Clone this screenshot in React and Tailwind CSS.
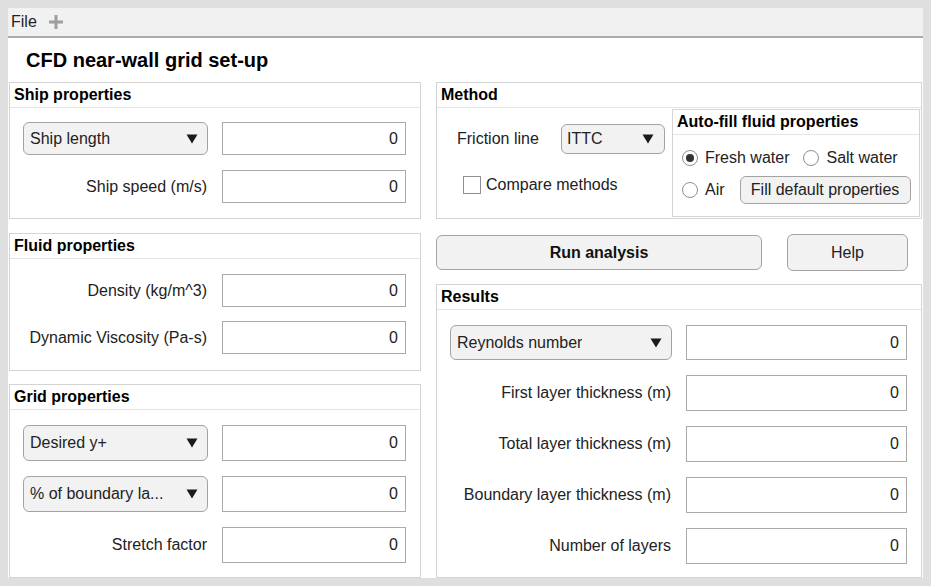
import React from 'react'

const FONT = { fontFamily: '"Liberation Sans", Arial, sans-serif' }

function Caret() {
  return (
    <svg width="12" height="10" viewBox="0 0 12 10" className="shrink-0">
      <path d="M0.5 0.5 H11.5 L6 9.5 Z" fill="#1a1a1a" />
    </svg>
  )
}

function Dropdown({ label, w, h }) {
  return (
    <div
      className={`flex items-center justify-between rounded-[6px] border border-[#a3a3a3] bg-[#f2f2f2] pl-[6px] pr-[9px] text-[16px] text-[#222] ${w} ${h}`}
    >
      <span className="truncate">{label}</span>
      <Caret />
    </div>
  )
}

function NumField({ w, h }) {
  return (
    <div
      className={`flex items-center justify-end border border-[#ababab] bg-white pr-[7px] text-[16px] text-[#222] ${w} ${h}`}
    >
      0
    </div>
  )
}

function Panel({ title, className, children }) {
  return (
    <div className={`flex flex-col border border-[#d4d4d4] bg-white ${className}`}>
      <div className="flex h-[25px] shrink-0 items-center border-b border-[#e4e4e4] pl-[4px] text-[16px] font-bold leading-none text-black">
        {title}
      </div>
      {children}
    </div>
  )
}

function Radio({ on }) {
  return (
    <span className="flex h-[16px] w-[16px] items-center justify-center rounded-full border border-[#8f8f8f] bg-white">
      {on && <span className="h-[8px] w-[8px] rounded-full bg-[#333]" />}
    </span>
  )
}

export default function App() {
  return (
    <div style={FONT} className="h-[586px] w-[931px] bg-[#dfdfdf] pl-[8px] pt-[8px]">
      <div className="flex h-[570px] w-[915px] flex-col bg-white">
        {/* Menu bar */}
        <div className="flex h-[30px] shrink-0 items-center gap-[11px] border-b-2 border-[#ababab] bg-[#f1f1f1] pl-[3px] text-[16px] text-[#222]">
          <span>File</span>
          <svg width="16" height="16" viewBox="0 0 16 16">
            <path d="M8 1 V15 M1 8 H15" stroke="#9e9e9e" strokeWidth="3" />
          </svg>
        </div>

        {/* Title */}
        <div className="flex h-[44px] shrink-0 items-center pl-[18px] text-[20px] font-bold text-black">
          CFD near-wall grid set-up
        </div>

        <div className="flex min-h-0 flex-1 gap-[15px] pl-[1px]">
          {/* Left column */}
          <div className="flex w-[412px] flex-col">
            <Panel title="Ship properties" className="h-[137px]">
              <div className="flex flex-col gap-[15px] pl-[13px] pt-[14px]">
                <div className="flex items-center gap-[14px]">
                  <Dropdown label="Ship length" w="w-[185px]" h="h-[33px]" />
                  <NumField w="w-[184px]" h="h-[33px]" />
                </div>
                <div className="flex items-center gap-[14px]">
                  <span className="w-[185px] pr-[1px] text-right text-[16px] text-[#222]">Ship speed (m/s)</span>
                  <NumField w="w-[184px]" h="h-[33px]" />
                </div>
              </div>
            </Panel>

            <Panel title="Fluid properties" className="mt-[14px] h-[138px]">
              <div className="flex flex-col gap-[14px] pl-[13px] pt-[15px]">
                <div className="flex items-center gap-[14px]">
                  <span className="w-[185px] pr-[1px] text-right text-[16px] text-[#222]">Density (kg/m^3)</span>
                  <NumField w="w-[184px]" h="h-[33px]" />
                </div>
                <div className="flex items-center gap-[14px]">
                  <span className="w-[185px] pr-[1px] text-right text-[16px] text-[#222]">Dynamic Viscosity (Pa-s)</span>
                  <NumField w="w-[184px]" h="h-[33px]" />
                </div>
              </div>
            </Panel>

            <Panel title="Grid properties" className="mt-[13px] flex-1">
              <div className="flex flex-col gap-[15px] pl-[13px] pt-[15px]">
                <div className="flex items-center gap-[14px]">
                  <Dropdown label="Desired y+" w="w-[185px]" h="h-[36px]" />
                  <NumField w="w-[184px]" h="h-[36px]" />
                </div>
                <div className="flex items-center gap-[14px]">
                  <Dropdown label="% of boundary la..." w="w-[185px]" h="h-[36px]" />
                  <NumField w="w-[184px]" h="h-[36px]" />
                </div>
                <div className="flex items-center gap-[14px]">
                  <span className="w-[185px] pr-[1px] text-right text-[16px] text-[#222]">Stretch factor</span>
                  <NumField w="w-[184px]" h="h-[36px]" />
                </div>
              </div>
            </Panel>
          </div>

          {/* Right column */}
          <div className="flex w-[486px] flex-col">
            <Panel title="Method" className="h-[137px]">
              <div className="flex flex-1">
                <div className="flex flex-1 flex-col">
                  <div className="mt-[16px] flex items-center">
                    <span className="ml-[20px] w-[104px] text-[16px] text-[#222]">Friction line</span>
                    <div className="flex h-[30px] w-[104px] items-center justify-between rounded-[6px] border border-[#a3a3a3] bg-[#f2f2f2] pl-[5px] pr-[10px] text-[16px] text-[#222]">
                      <span>ITTC</span>
                      <Caret />
                    </div>
                  </div>
                  <div className="mt-[22px] flex items-center gap-[5px] pl-[26px]">
                    <span className="h-[18px] w-[18px] border border-[#8f8f8f] bg-white" />
                    <span className="text-[16px] leading-none text-[#222]">Compare methods</span>
                  </div>
                </div>
                <div className="mb-[1px] mr-[1px] mt-[1px] flex w-[248px] flex-col border border-[#d4d4d4]">
                  <div className="flex h-[25px] shrink-0 items-center border-b border-[#e4e4e4] pl-[4px] text-[16px] font-bold leading-none text-black">
                    Auto-fill fluid properties
                  </div>
                  <div className="flex flex-col pl-[9px] pt-[14px] text-[16px] leading-none text-[#222]">
                    <div className="flex h-[18px] items-center">
                      <Radio on />
                      <span className="ml-[7px]">Fresh water</span>
                      <span className="ml-[14px]"><Radio /></span>
                      <span className="ml-[7px]">Salt water</span>
                    </div>
                    <div className="mt-[9px] flex items-center">
                      <Radio />
                      <span className="ml-[7px]">Air</span>
                      <div className="ml-[15px] flex h-[28px] w-[171px] items-center justify-center rounded-[6px] border border-[#a3a3a3] bg-[#f2f2f2]">
                        Fill default properties
                      </div>
                    </div>
                  </div>
                </div>
              </div>
            </Panel>

            <div className="mt-[15px] flex h-[37px] items-center">
              <div className="flex h-[35px] w-[326px] items-center justify-center rounded-[6px] border border-[#a3a3a3] bg-[#f2f2f2] text-[16px] font-bold text-[#111]">
                Run analysis
              </div>
              <div className="ml-[25px] flex h-[37px] w-[121px] items-center justify-center rounded-[6px] border border-[#a3a3a3] bg-[#f2f2f2] text-[16px] text-[#222]">
                Help
              </div>
            </div>

            <Panel title="Results" className="mt-[13px] flex-1">
              <div className="flex flex-col gap-[15px] pl-[13px] pt-[15px]">
                <div className="flex items-center gap-[14px]">
                  <Dropdown label="Reynolds number" w="w-[222px]" h="h-[35px]" />
                  <NumField w="w-[221px]" h="h-[35px]" />
                </div>
                {['First layer thickness (m)', 'Total layer thickness (m)', 'Boundary layer thickness (m)', 'Number of layers'].map(l => (
                  <div key={l} className="flex items-center gap-[14px]">
                    <span className="w-[222px] pr-[1px] text-right text-[16px] text-[#222]">{l}</span>
                    <NumField w="w-[221px]" h="h-[36px]" />
                  </div>
                ))}
              </div>
            </Panel>
          </div>
        </div>
      </div>
    </div>
  )
}
